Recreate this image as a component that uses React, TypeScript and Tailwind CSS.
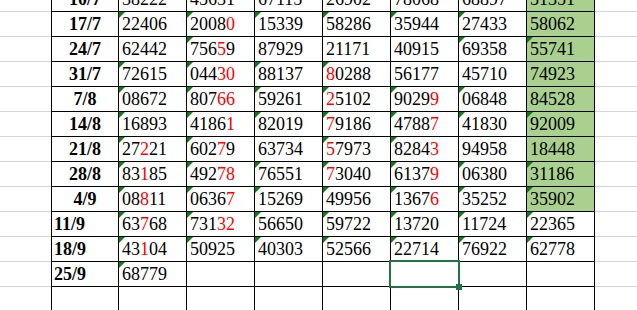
type Row = {
  date: string;
  cells: string[];
  marks: string;
  green: boolean;
  left?: boolean;
};

// digits inside [ ] are drawn red
const rows: Row[] = [
  { date: "10/7", cells: ["38222", "45631", "67115", "26902", "78068", "68897", "51351"], marks: "0000000", green: true },
  { date: "17/7", cells: ["22406", "2008[0]", "15339", "58286", "35944", "27433", "58062"], marks: "1111110", green: true },
  { date: "24/7", cells: ["62442", "756[5]9", "87929", "21171", "40915", "69358", "55741"], marks: "0100011", green: true },
  { date: "31/7", cells: ["72615", "044[30]", "88137", "[8]0288", "56177", "45710", "74923"], marks: "1111000", green: true },
  { date: "7/8", cells: ["08672", "807[66]", "59261", "[2]5102", "9029[9]", "06848", "84528"], marks: "1111110", green: true },
  { date: "14/8", cells: ["16893", "4186[1]", "82019", "[7]9186", "4788[7]", "41830", "92009"], marks: "1111111", green: true },
  { date: "21/8", cells: ["27[2]21", "602[7]9", "63734", "[5]7973", "8284[3]", "94958", "18448"], marks: "1101100", green: true },
  { date: "28/8", cells: ["83[1]85", "492[78]", "76551", "[7]3040", "6137[9]", "06380", "31186"], marks: "1111111", green: true },
  { date: "4/9", cells: ["08[8]11", "0636[7]", "15269", "49956", "1367[6]", "35252", "35902"], marks: "1111111", green: true },
  { date: "11/9", cells: ["63[7]68", "731[32]", "56650", "59722", "13720", "11724", "22365"], marks: "1111111", green: false, left: true },
  { date: "18/9", cells: ["43[1]04", "50925", "40303", "52566", "22714", "76922", "62778"], marks: "1111111", green: false, left: true },
  { date: "25/9", cells: ["68779", "", "", "", "", "", ""], marks: "1000000", green: false, left: true },
];

function Digits({ value }: { value: string }) {
  const parts = value.split(/(\[[^\]]*\])/).filter(Boolean);
  return (
    <>
      {parts.map((p, i) =>
        p.startsWith("[") ? (
          <span key={i} className="text-[#ff0000]">
            {p.slice(1, -1)}
          </span>
        ) : (
          <span key={i}>{p}</span>
        )
      )}
    </>
  );
}

function Mark() {
  return (
    <svg className="absolute left-0 top-0" width="6" height="6" viewBox="0 0 6 6">
      <polygon points="0,0 6,0 0,6" fill="#0a7d16" />
    </svg>
  );
}

export default function App() {
  return (
    <div className="h-[310px] w-[637px] overflow-hidden bg-white font-['Liberation_Serif',serif] text-[18px] text-black">
      <div className="-mt-[13px] flex flex-col">
        {rows.map((r, ri) => (
          <div key={r.date} className="flex h-[25px]">
            <div className="w-[51px] shrink-0 border-b border-[#d4d4d4]" />
            <div
              className={`w-[68px] shrink-0 border-l border-r border-b border-black font-bold leading-[24px] ${
                r.left ? "pl-[2px] text-left" : "text-center"
              }`}
            >
              {r.date}
            </div>
            {r.cells.map((c, ci) => {
              const isGreen = r.green && ci === 6;
              const selected = ri === 11 && ci === 4;
              return (
                <div
                  key={ci}
                  className={`relative w-[68px] shrink-0 border-r border-b border-black pl-[3px] leading-[24px] ${
                    isGreen ? "bg-[#a9d08e]" : ""
                  }`}
                >
                  {r.marks[ci] === "1" && <Mark />}
                  <Digits value={c} />
                  {selected && (
                    <div className="absolute -left-[2px] -top-[2px] -right-[2px] -bottom-[2px] z-10 border-2 border-[#217346]">
                      <div className="absolute -right-[4px] -bottom-[4px] h-[6px] w-[6px] bg-[#217346]" />
                    </div>
                  )}
                </div>
              );
            })}
            <div className="flex-1 border-b border-[#d4d4d4]" />
          </div>
        ))}
        <div className="flex h-[25px]">
          <div className="w-[51px] shrink-0 border-b border-[#d4d4d4]" />
          <div className="w-[68px] shrink-0 border-l border-r border-black" />
          {[0, 1, 2, 3, 4, 5, 6].map((i) => (
            <div key={i} className="w-[68px] shrink-0 border-r border-black" />
          ))}
          <div className="flex-1 border-b border-[#d4d4d4]" />
        </div>
      </div>
    </div>
  );
}
